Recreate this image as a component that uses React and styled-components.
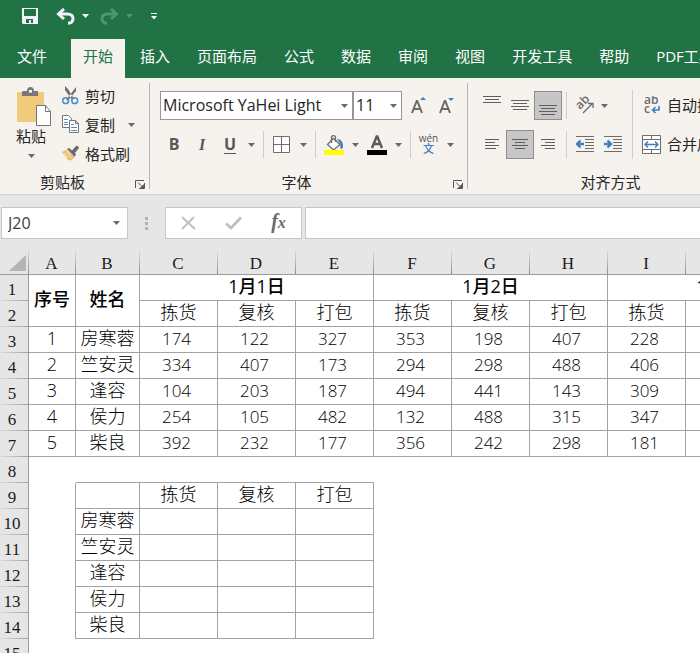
import React, { useState } from "react";
import styled, { createGlobalStyle, css } from "styled-components";

const ui = `"Open Sans", "Noto Sans CJK SC", sans-serif`;
const green = "#217346";
const ink = "#262626";
const grey = "#6a6a6a";
const blue = "#3f7fbf";

const GlobalStyle = createGlobalStyle`
  *, *::before, *::after { box-sizing: border-box; }
  body { margin: 0; background: #fff; font-family: ${ui}; color: ${ink}; overflow: hidden; }
  button, input, select { font: inherit; color: inherit; margin: 0; padding: 0; }
  button { border: 0; background: none; cursor: pointer; }
  svg { display: block; flex: none; }
`;

const Window = styled.div`
  display: flex;
  flex-direction: column;
  height: 100vh;
  overflow: hidden;
`;

/* ---------- title bar and tabs ---------- */
const TitleBar = styled.header`
  display: flex;
  align-items: center;
  height: 39px;
  padding: 0 0 7px 22px;
  flex: none;
  background: ${green};
  color: #fff;
`;

const QuickButton = styled.button`
  display: flex;
  align-items: center;
  gap: 7px;
  margin-right: ${(p) => p.$after}px;
  color: ${(p) => (p.disabled ? "#4f9470" : "#f1f1fb")};
`;

const TabBar = styled.nav`
  display: flex;
  gap: 3px;
  height: 39px;
  padding-left: 5px;
  flex: none;
  background: ${green};
`;

const Tab = styled.button`
  flex: none;
  padding: 0 12px 4px;
  font-size: 15px;
  line-height: 35px;
  white-space: nowrap;
  color: ${(p) => (p.$active ? green : "#fff")};
  background: ${(p) => (p.$active ? "#f6f3ee" : "transparent")};
  &:first-child { margin-right: 9px; }
`;

/* ---------- ribbon ---------- */
const Ribbon = styled.section`
  display: flex;
  height: 117px;
  padding: 5px 0;
  flex: none;
  background: #f6f3ee;
  border-bottom: 1px solid #d0cece;
`;

const Group = styled.section`
  display: flex;
  flex-direction: column;
  flex: none;
  width: ${(p) => p.$width}px;
  border-right: 1px solid #b9b6b8;
`;

const GroupBody = styled.div`
  display: flex;
  flex: 1;
  min-height: 0;
  padding-left: 10px;
`;

const GroupFooter = styled.footer`
  display: flex;
  align-items: center;
  flex: none;
  height: 22px;
  padding: 8px 4px 0 0;
  font-size: 15px;
  line-height: 20px;
`;

const GroupTitle = styled.span`
  flex: 1;
  padding-right: 10px;
  text-align: center;
`;

const LauncherButton = styled.button`
  padding-top: 4px;
`;

const PasteButton = styled.button`
  display: flex;
  flex-direction: column;
  align-items: center;
  width: 42px;
  padding-top: 4px;
  font-size: 15px;
  line-height: 20px;
  & > svg:last-child { margin-top: 8px; }
`;

const Stack = styled.div`
  display: flex;
  flex-direction: column;
  padding: ${(p) => p.$pad || "0"};
  gap: ${(p) => p.$gap || 0}px;
`;

const LabelButton = styled.button`
  display: flex;
  align-items: center;
  gap: 6px;
  flex: none;
  height: ${(p) => p.$height || 25}px;
  font-size: 15px;
  line-height: 20px;
  white-space: nowrap;
  & > svg:nth-of-type(2) { margin-left: 7px; }
`;

const Tools = styled.div`
  display: flex;
  align-items: center;
  height: 29px;
`;

const ToolButton = styled.button`
  display: flex;
  align-items: center;
  justify-content: center;
  flex: none;
  width: ${(p) => p.$width || 28}px;
  height: 29px;
  ${(p) =>
    p.$pressed &&
    css`
      background: #c6c6c6;
      border: 1px solid #8d8d8d;
    `}
`;

const Letter = styled.span`
  font-size: 16px;
  line-height: 17px;
  font-weight: 700;
  color: #585858;
  font-family: ${(p) => (p.$serif ? `"Liberation Serif", serif` : ui)};
  font-style: ${(p) => (p.$serif ? "italic" : "normal")};
  border-bottom: 1px solid ${(p) => (p.$line ? "#585858" : "transparent")};
`;

const Divider = styled.span`
  flex: none;
  width: 1px;
  height: ${(p) => p.$height || 27}px;
  margin-left: ${(p) => p.$before || 0}px;
  background: #d0cdd0;
`;

const SelectBox = styled.div`
  position: relative;
  width: ${(p) => p.$width}px;
  height: 29px;
  margin-right: ${(p) => p.$after || 0}px;
  & > svg { position: absolute; right: 5px; top: 13px; pointer-events: none; }
`;

const Select = styled.select`
  appearance: none;
  width: 100%;
  height: 100%;
  padding: 0 0 2px 2px;
  border: 1px solid #969696;
  border-radius: 0;
  background: #fff;
  font-size: 16px;
`;

/* ---------- formula bar ---------- */
const FormulaBar = styled.section`
  display: flex;
  align-items: center;
  padding: 12px 0 12px 1px;
  flex: none;
  background: #e6e6e6;
`;

const Field = styled.div`
  display: flex;
  align-items: center;
  width: ${(p) => p.$width}px;
  height: 32px;
  flex: none;
  background: #fff;
  border: 1px solid #c6c6c6;
`;

const NameInput = styled.input`
  flex: 1;
  min-width: 0;
  border: 0;
  padding-left: 6px;
  background: none;
  font-size: 16px;
  line-height: 22px;
  color: #404040;
`;

const FormulaInput = styled.input`
  flex: 1;
  min-width: 0;
  height: 32px;
  margin-left: 3px;
  padding: 0 8px;
  border: 1px solid #c6c6c6;
  border-right: 0;
  font-size: 15px;
`;

const Grip = styled.span`
  display: grid;
  gap: 2px;
  margin: 0 17px 0 17px;
  & > i { width: 3px; height: 3px; background: #b0b0b0; }
`;

/* ---------- sheet ---------- */
const Sheet = styled.main`
  flex: 1;
  min-height: 0;
  overflow: hidden;
  background: #fff;
`;

const Grid = styled.table`
  table-layout: fixed;
  width: 842px;
  border-spacing: 0;
  border-collapse: separate;
`;

const Col = styled.col`
  width: ${(p) => p.$width}px;
`;

const headFont = css`
  padding: 0;
  background-color: #e6e6e6;
  background-repeat: no-repeat;
  color: #1a1a1a;
  font-family: "Liberation Serif", serif;
  font-size: 17px;
  font-weight: 400;
`;

const columnEdge = css`
  border-bottom: 1px solid #9c9c9c;
  background-image: linear-gradient(#d9d9d9, #8f8f8f);
  background-size: 1px 100%;
  background-position: right top;
`;

const Corner = styled.td`
  ${headFont}
  ${columnEdge}
  & > svg { margin: 0 3px 0 auto; }
`;

const ColHead = styled.th`
  ${headFont}
  ${columnEdge}
  height: 24px;
  padding: 3px 2px 0 0;
  line-height: 20px;
`;

const RowHead = styled.th`
  ${headFont}
  height: 26px;
  padding: 4px 4px 0 0;
  line-height: 20px;
  border-right: 1px solid #9c9c9c;
  background-image: linear-gradient(90deg, #dcdcdc, #a0a0a0);
  background-size: 100% 1px;
  background-position: left bottom;
`;

const Cell = styled.td`
  height: 26px;
  padding: 0 0 2px;
  text-align: center;
  white-space: nowrap;
  font-size: 18px;
  line-height: 23px;
  font-weight: 300;
  color: #000;
  border: 0 solid #a3a3a3;
  border-right-width: ${(p) => (p.$right ? 1 : 0)}px;
  border-bottom-width: ${(p) => (p.$bottom ? 1 : 0)}px;
`;

const ValueCell = styled(Cell)`
  padding-right: 4px;
  font-size: 17px;
`;

const TitleCell = styled(Cell)`
  padding-bottom: 3px;
  line-height: 22px;
  font-weight: 500;
`;

/* ---------- icons ---------- */
const Caret = ({ color = grey }) => (
  <svg width="7" height="4" viewBox="0 0 7 4"><path d="M0 0h7L3.5 4z" fill={color} /></svg>
);

const SaveIcon = () => (
  <svg width="16" height="16" viewBox="0 0 16 16">
    <path fill="currentColor" fillRule="evenodd" d="M0 0h16v16H1l-1-1zM2 1v7h12V1zM4 11v4h3v-3h2v3h2v-4z" />
  </svg>
);

const UndoIcon = () => (
  <svg width="19" height="17" viewBox="0 0 19 17">
    <path fill="none" stroke="currentColor" strokeWidth="3" d="M2 6h9c4 0 6 2 6 4.700S15 15 12 15.200" />
    <path fill="none" stroke="currentColor" strokeWidth="3" d="M8 1L2.500 6 8 11" />
  </svg>
);

const RedoIcon = () => (
  <svg width="19" height="17" viewBox="0 0 19 17">
    <path fill="none" stroke="currentColor" strokeWidth="3" d="M17 6H8c-4 0-6 2-6 4.700S4 15 7 15.200M11 1l5.500 5L11 11" />
  </svg>
);

const MoreIcon = () => (
  <svg width="6" height="7" viewBox="0 0 6 7"><path fill="#fff" d="M0 0h6v1H0zM0 3h6L3 6.500z" /></svg>
);

const PasteIcon = () => (
  <svg width="41" height="39" viewBox="-6 0 41 39">
    <rect x="0" y="5" width="27" height="30" rx="1" fill="#f0cb7c" />
    <path fill="#7b7779" fillRule="evenodd" d="M5 9V5c0-1 1-1 2-1h3c0-2 1-4 3.500-4S17 2 17 4h4v5zM12 3v3h3V3z" />
    <path fill="#fff" stroke="#76727a" d="M19.500 18.500h9l5 6v14h-14z" />
    <path fill="none" stroke="#76727a" d="M28.500 18.500v6h5" />
  </svg>
);

const CutIcon = () => (
  <svg width="17" height="19" viewBox="0 0 17 19">
    <path d="M3 0l3 3 6 10-2 1-7-10zM14 1l-3 4-7 9 2 .5L14 5z" fill="#6f6d70" />
    <circle cx="3.700" cy="14.700" r="2.900" fill="none" stroke="#4f8bc6" strokeWidth="1.500" />
    <circle cx="12.700" cy="14.700" r="2.900" fill="none" stroke="#4f8bc6" strokeWidth="1.500" />
  </svg>
);

const CopyIcon = () => (
  <svg width="17" height="19" viewBox="0 0 17 19">
    <path d="M.5.500h6l3 3v9h-9z" fill="#fff" stroke="#77747a" />
    <path d="M2 4.500h4M2 7.500h4M2 9.500h4" stroke="#4f8bc6" />
    <path d="M7.500 5.500h6l3 3v9h-9z" fill="#fff" stroke="#77747a" />
    <path d="M13.500 5.500v3h3" fill="none" stroke="#77747a" />
    <path d="M9 9.500h3M9 12.500h6M9 15.500h6" stroke="#4f8bc6" />
  </svg>
);

const BrushIcon = () => (
  <svg width="17" height="15" viewBox="0 0 17 15">
    <path d="M6 3L0 6l6 8 3 .5L13 11z" fill="#f0bd75" />
    <path d="M2 7l4 5M5 5l4 7" stroke="#fbe6c4" />
    <path d="M5 3l2-1 3 2.500L14 0h2l1 2-4 5 1 2-2 2z" fill="#6b696b" />
    <path d="M5 3.500l7 7" stroke="#f6f3ee" strokeWidth=".8" />
  </svg>
);

const LaunchIcon = () => (
  <svg width="10" height="9" viewBox="0 0 10 9">
    <path d="M.5 8V.5H9M3 2.500l5 5M9.500 3v5.500H4" fill="none" stroke="#57565a" />
    <path d="M5 8h4V4z" fill="#57565a" />
  </svg>
);

const SizeIcon = ({ down }) => (
  <svg width="15" height="17" viewBox="0 0 15 17">
    <path d="M1 16L5.700 4h.6L11 16M3 12h6" fill="none" stroke={grey} strokeWidth="2" />
    <path d={down ? "M9 1h6L12 4z" : "M9 3h6L12 0z"} fill={blue} />
  </svg>
);

const BordersIcon = () => (
  <svg width="17" height="17" viewBox="0 0 17 17">
    <path d="M.5.500h16v16H.5zM8.500.500v16M.5 8.500h16" fill="#fff" stroke="#6f6d70" />
  </svg>
);

const FillIcon = () => (
  <svg width="20" height="20" viewBox="0 0 20 20">
    <path d="M9.500 3.500L16 9.500 9.500 15 3.500 9.500z" fill="#fff" stroke={grey} strokeWidth="1.300" />
    <path d="M7.500 8V2.500c0-2.500 4-2.500 4 0V7" fill="none" stroke={grey} strokeWidth="1.300" />
    <path d="M13 4c4 0 6 3 6 7 0 1-.5 3-1.500 3-2 0-1-4-1-5z" fill={blue} />
    <path d="M0 15h20v5H0z" fill="#ffff00" />
  </svg>
);

const FontColorIcon = () => (
  <svg width="20" height="20" viewBox="0 0 20 20">
    <path d="M5 13L9.700 1.500h.6L15 13M7 9h6" fill="none" stroke="#5c5c5c" strokeWidth="2.500" />
    <path d="M0 15h20v5H0z" fill="#000" />
  </svg>
);

const Phonetic = styled.span`
  display: flex;
  flex-direction: column;
  align-items: center;
  font-size: 10px;
  line-height: 9px;
  color: #555;
  & > b { font-size: 11px; line-height: 12px; font-weight: 500; color: ${blue}; }
`;

const lineSets = {
  top: [[0, 18, 0], [2, 14, 3], [0, 18, 6]],
  middle: [[0, 18, 0], [2, 14, 3], [0, 18, 6], [2, 14, 9]],
  bottom: [[0, 18, 0], [2, 14, 3], [0, 18, 6], [2, 14, 9]],
  left: [[0, 14, 0], [0, 10, 3], [0, 14, 6], [0, 11, 9]],
  center: [[0, 16, 0], [3, 10, 3], [0, 16, 6], [3, 10, 9]],
  right: [[0, 14, 0], [4, 10, 3], [0, 14, 6], [4, 10, 9]],
};
const lineBox = { top: [18, 19], middle: [18, 12], bottom: [18, 2], left: [14, 12], center: [16, 12], right: [14, 12] };

const LinesIcon = ({ kind }) => {
  const [w, h] = lineBox[kind];
  return (
    <svg width={w} height={h} viewBox={`0 0 ${w} ${h}`} overflow="visible">
      {lineSets[kind].map(([x, len, y]) => (
        <rect key={y} x={x} y={y} width={len} height="1" fill="#5f5d60" />
      ))}
    </svg>
  );
};

const IndentIcon = ({ right }) => (
  <svg width="18" height="17" viewBox="0 0 18 17">
    <path d="M0 .5h18M9 3.500h9M9 6.500h9M9 9.500h9M9 12.500h9M0 15.500h18" stroke="#6f6d70" />
    <path d={right ? "M0 8h6M3.500 4.500L7 8l-3.500 3.500" : "M2 8h6M4.500 4.500L1 8l3.500 3.500"} fill="none" stroke={blue} strokeWidth="2.400" />
  </svg>
);

const OrientIcon = () => (
  <svg width="19" height="18" viewBox="0 0 19 18" overflow="visible">
    <text transform="translate(5 13) rotate(-45)" fontFamily="Open Sans" fontSize="12" fontWeight="600" fill={grey}>ab</text>
    <path d="M8 16L17.500 6.500M13 6.500h5V11" fill="none" stroke={grey} strokeWidth="1.300" />
  </svg>
);

const WrapIcon = () => (
  <svg width="19" height="18" viewBox="0 0 19 18">
    <text x="2" y="8" fontFamily="Open Sans" fontSize="12" fontWeight="600" fill={grey}>ab</text>
    <text x="2" y="17" fontFamily="Open Sans" fontSize="12" fontWeight="600" fill={grey}>c</text>
    <path d="M17 10v4h-6M13.500 11L10.500 14l3 3" fill="none" stroke={blue} strokeWidth="1.600" />
  </svg>
);

const MergeIcon = () => (
  <svg width="19" height="19" viewBox="0 0 19 19">
    <path d="M.5.500h18v18H.5zM.5 4.500h18M.5 14.500h18M9.500.500v4M9.500 14.500v4" fill="#fff" stroke="#6f6d70" />
    <path d="M3 9.500h13M6 6.500l-3 3 3 3M13 6.500l3 3-3 3" fill="none" stroke={blue} strokeWidth="1.400" />
  </svg>
);

const CancelIcon = () => (
  <svg width="15" height="14" viewBox="0 0 15 14"><path d="M1 1l13 12M13 1L1 13" stroke="#c0c0c0" strokeWidth="2" /></svg>
);
const EnterIcon = () => (
  <svg width="17" height="14" viewBox="0 0 17 14"><path d="M1 7.500l5 4.500L16 1.500" fill="none" stroke="#c0c0c0" strokeWidth="2.800" /></svg>
);
const FxLabel = styled.span`
  font: italic 700 20px/24px "Liberation Serif", serif;
  color: #6a6a6a;
  padding-bottom: 3px;
  & > small { font-size: 16px; }
`;

/* ---------- data ---------- */
const tabs = ["文件", "开始", "插入", "页面布局", "公式", "数据", "审阅", "视图", "开发工具", "帮助", "PDF工具集"];
const columns = ["A", "B", "C", "D", "E", "F", "G", "H", "I", "J", "K"];
const steps = ["拣货", "复核", "打包"];
const dailySteps = [...steps, ...steps, ...steps];
const people = [
  ["房寒蓉", 174, 122, 327, 353, 198, 407, 228],
  ["竺安灵", 334, 407, 173, 294, 298, 488, 406],
  ["逢容", 104, 203, 187, 494, 441, 143, 309],
  ["侯力", 254, 105, 482, 132, 488, 315, 347],
  ["柴良", 392, 232, 177, 356, 242, 298, 181],
];

function SummaryRow({ number, cells }) {
  return (
    <tr>
      <RowHead scope="row">{number}</RowHead>
      <Cell $right />
      {cells.map((c, i) => <Cell key={i} $right $bottom>{c}</Cell>)}
      <Cell colSpan={6} />
    </tr>
  );
}

function Worksheet() {
  return (
    <Sheet>
      <Grid>
        <colgroup>
          <Col $width={29} />
          <Col $width={47} />
          <Col $width={64} />
          {dailySteps.map((_, i) => <Col key={i} $width={78} />)}
        </colgroup>
        <thead>
          <tr>
            <Corner>
              <svg width="17" height="16" viewBox="0 0 17 16"><path d="M17 0v16H0z" fill="#b4b4b8" /></svg>
            </Corner>
            {columns.map((c) => <ColHead key={c} scope="col">{c}</ColHead>)}
          </tr>
        </thead>
        <tbody>
          <tr>
            <RowHead scope="row">1</RowHead>
            <TitleCell rowSpan={2} $right $bottom>序号</TitleCell>
            <TitleCell rowSpan={2} $right $bottom>姓名</TitleCell>
            {[1, 2, 3].map((d) => <TitleCell key={d} colSpan={3} $right $bottom>{`1月${d}日`}</TitleCell>)}
          </tr>
          <tr>
            <RowHead scope="row">2</RowHead>
            {dailySteps.map((s, i) => <Cell key={i} $right $bottom>{s}</Cell>)}
          </tr>
          {people.map(([name, ...values], i) => (
            <tr key={name}>
              <RowHead scope="row">{i + 3}</RowHead>
              <Cell $right $bottom>{i + 1}</Cell>
              <Cell $right $bottom>{name}</Cell>
              {values.map((v, k) => <ValueCell key={k} $right $bottom>{v}</ValueCell>)}
              <ValueCell $right $bottom />
              <ValueCell $right $bottom />
            </tr>
          ))}
          <tr>
            <RowHead scope="row">8</RowHead>
            <Cell />
            {[0, 1, 2, 3].map((i) => <Cell key={i} $bottom />)}
            <Cell colSpan={6} />
          </tr>
          <SummaryRow number={9} cells={["", ...steps]} />
          {people.map(([name], i) => (
            <SummaryRow key={name} number={i + 10} cells={[name, "", "", ""]} />
          ))}
          <tr>
            <RowHead scope="row">15</RowHead>
            <Cell colSpan={11} />
          </tr>
        </tbody>
      </Grid>
    </Sheet>
  );
}

const Footer = ({ children }) => (
  <GroupFooter>
    <GroupTitle>{children}</GroupTitle>
    <LauncherButton aria-label={`${children}设置`}><LaunchIcon /></LauncherButton>
  </GroupFooter>
);

export default function App() {
  const [active, setActive] = useState("开始");
  const [formula, setFormula] = useState("");
  const [cell, setCell] = useState("J20");
  return (
    <>
      <GlobalStyle />
      <Window>
        <TitleBar>
          <QuickButton $after={18} aria-label="保存"><SaveIcon /></QuickButton>
          <QuickButton $after={11} aria-label="撤消"><UndoIcon /><Caret color="#fff" /></QuickButton>
          <QuickButton $after={18} aria-label="恢复" disabled><RedoIcon /><Caret color="#4f9470" /></QuickButton>
          <QuickButton $after={0} aria-label="自定义快速访问工具栏"><MoreIcon /></QuickButton>
        </TitleBar>
        <TabBar>
          {tabs.map((t) => <Tab key={t} $active={t === active} onClick={() => setActive(t)}>{t}</Tab>)}
        </TabBar>

        <Ribbon>
          <Group $width={150}>
            <GroupBody>
              <PasteButton><PasteIcon />粘贴<Caret /></PasteButton>
              <Stack $pad="0 0 0 10px" $gap={4}>
                <LabelButton><CutIcon />剪切</LabelButton>
                <LabelButton><CopyIcon />复制<Caret /></LabelButton>
                <LabelButton><BrushIcon />格式刷</LabelButton>
              </Stack>
            </GroupBody>
            <Footer>剪贴板</Footer>
          </Group>

          <Group $width={318}>
            <GroupBody>
              <Stack $pad="8px 0 0" $gap={10}>
                <Tools>
                  <SelectBox $width={193}>
                    <Select aria-label="字体"><option>Microsoft YaHei Light</option></Select>
                    <Caret />
                  </SelectBox>
                  <SelectBox $width={49} $after={2}>
                    <Select aria-label="字号"><option>11</option></Select>
                    <Caret />
                  </SelectBox>
                  <ToolButton aria-label="增大字号"><SizeIcon /></ToolButton>
                  <ToolButton aria-label="减小字号"><SizeIcon down /></ToolButton>
                </Tools>
                <Tools>
                  <ToolButton aria-label="加粗"><Letter>B</Letter></ToolButton>
                  <ToolButton aria-label="倾斜"><Letter $serif>I</Letter></ToolButton>
                  <ToolButton aria-label="下划线"><Letter $line>U</Letter></ToolButton>
                  <ToolButton $width={14} aria-label="下划线样式"><Caret /></ToolButton>
                  <Divider $before={5} />
                  <ToolButton $width={34} aria-label="边框"><BordersIcon /></ToolButton>
                  <ToolButton $width={10} aria-label="边框样式"><Caret /></ToolButton>
                  <Divider $before={7} />
                  <ToolButton $width={36} aria-label="填充颜色"><FillIcon /></ToolButton>
                  <ToolButton $width={7} aria-label="填充颜色选项"><Caret /></ToolButton>
                  <ToolButton $width={36} aria-label="字体颜色"><FontColorIcon /></ToolButton>
                  <ToolButton $width={7} aria-label="字体颜色选项"><Caret /></ToolButton>
                  <Divider $before={8} />
                  <ToolButton $width={35} aria-label="拼音"><Phonetic>wén<b>文</b></Phonetic></ToolButton>
                  <ToolButton $width={8} aria-label="拼音选项"><Caret /></ToolButton>
                </Tools>
              </Stack>
            </GroupBody>
            <Footer>字体</Footer>
          </Group>

          <Group $width={310}>
            <GroupBody>
              <Stack $pad="8px 4px 0 0" $gap={10}>
                <Tools>
                  <ToolButton aria-label="顶端对齐"><LinesIcon kind="top" /></ToolButton>
                  <ToolButton aria-label="垂直居中"><LinesIcon kind="middle" /></ToolButton>
                  <ToolButton $pressed aria-label="底端对齐"><LinesIcon kind="bottom" /></ToolButton>
                </Tools>
                <Tools>
                  <ToolButton aria-label="左对齐"><LinesIcon kind="left" /></ToolButton>
                  <ToolButton $pressed aria-label="居中"><LinesIcon kind="center" /></ToolButton>
                  <ToolButton aria-label="右对齐"><LinesIcon kind="right" /></ToolButton>
                </Tools>
              </Stack>
              <Stack $pad="8px 9px 0 0" $gap={10}>
                <Tools>
                  <Divider />
                  <ToolButton $width={34} aria-label="方向"><OrientIcon /></ToolButton>
                  <ToolButton $width={7} aria-label="方向选项"><Caret /></ToolButton>
                </Tools>
                <Tools>
                  <Divider />
                  <ToolButton $width={36} aria-label="减少缩进量"><IndentIcon /></ToolButton>
                  <ToolButton $width={20} aria-label="增加缩进量"><IndentIcon right /></ToolButton>
                </Tools>
              </Stack>
              <Stack $pad="7px 9px 0 0"><Divider $height={69} /></Stack>
              <Stack $pad="8px 0 0" $gap={11}>
                <LabelButton $height={28}><WrapIcon />自动换行</LabelButton>
                <LabelButton $height={28}><MergeIcon />合并后居中</LabelButton>
              </Stack>
            </GroupBody>
            <Footer>对齐方式</Footer>
          </Group>
        </Ribbon>

        <FormulaBar>
          <Field $width={127}>
            <NameInput aria-label="名称框" value={cell} onChange={(e) => setCell(e.target.value)} />
            <ToolButton $width={22} aria-label="名称列表"><Caret /></ToolButton>
          </Field>
          <Grip><i /><i /><i /></Grip>
          <Field $width={137}>
            <ToolButton $width={45} aria-label="取消"><CancelIcon /></ToolButton>
            <ToolButton $width={45} aria-label="输入"><EnterIcon /></ToolButton>
            <ToolButton $width={45} aria-label="插入函数"><FxLabel>f<small>x</small></FxLabel></ToolButton>
          </Field>
          <FormulaInput aria-label="编辑栏" value={formula} onChange={(e) => setFormula(e.target.value)} />
        </FormulaBar>

        <Worksheet />
      </Window>
    </>
  );
}
